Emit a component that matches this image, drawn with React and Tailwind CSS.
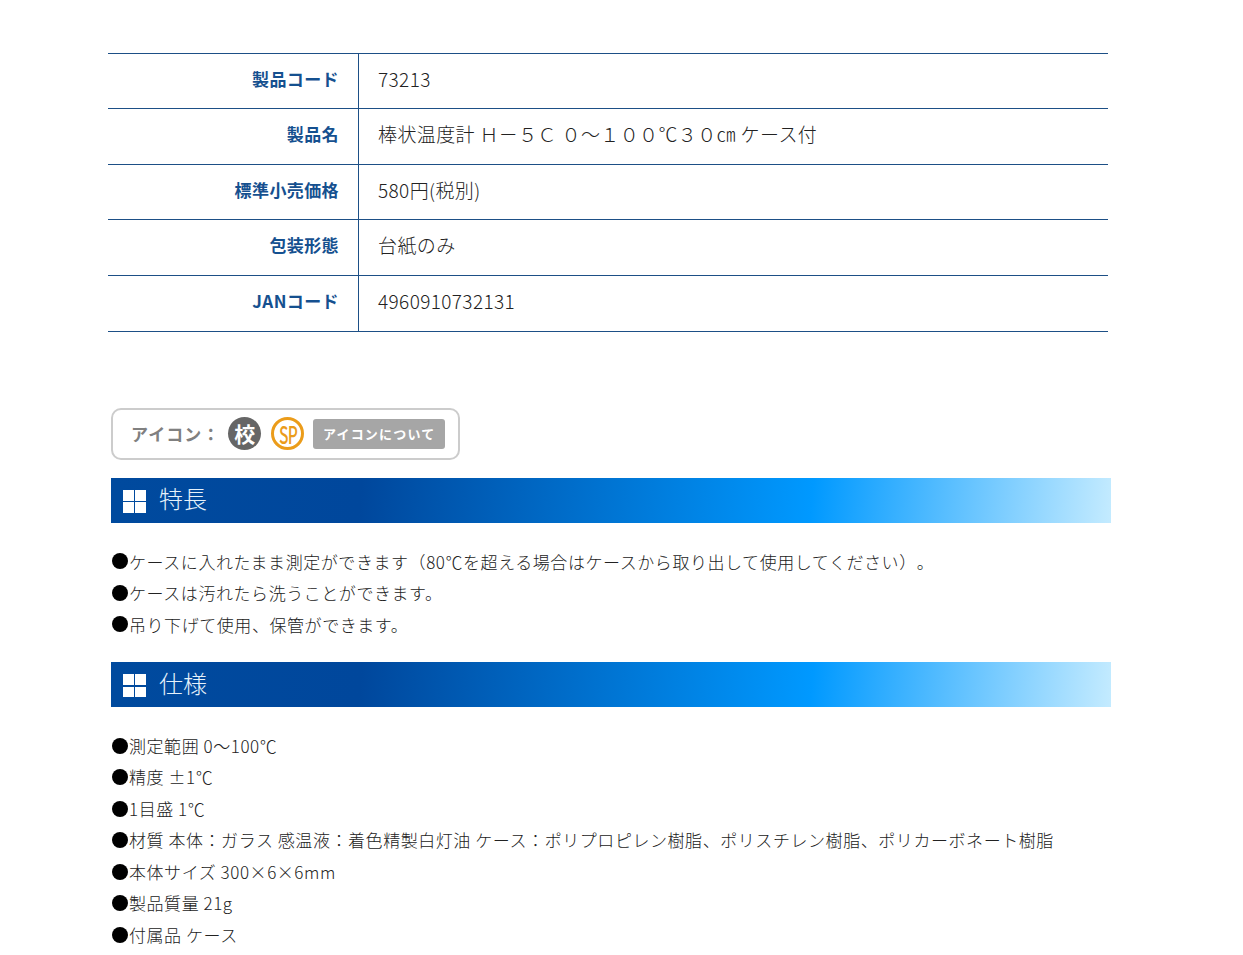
const rows = [
  ["製品コード", "73213"],
  ["製品名", "棒状温度計 Ｈ－５Ｃ ０～１００℃３０㎝ ケース付"],
  ["標準小売価格", "580円(税別)"],
  ["包装形態", "台紙のみ"],
  ["JANコード", "4960910732131"],
];
const features = [
  "ケースに入れたまま測定ができます（80℃を超える場合はケースから取り出して使用してください）。",
  "ケースは汚れたら洗うことができます。",
  "吊り下げて使用、保管ができます。",
];
const specs = [
  "測定範囲 0～100℃",
  "精度 ±1℃",
  "1目盛 1℃",
  "材質 本体：ガラス 感温液：着色精製白灯油 ケース：ポリプロピレン樹脂、ポリスチレン樹脂、ポリカーボネート樹脂",
  "本体サイズ 300×6×6mm",
  "製品質量 21g",
  "付属品 ケース",
];

function Heading({ children }) {
  return (
    <div className="flex h-[45px] w-[1000px] items-center bg-[linear-gradient(95deg,#004a9e_0%,#00479c_25%,#0099ff_70%,#c4ebff_100%)] pl-3">
      <div className="mt-[2px] grid h-[23px] w-[23px] grid-cols-2 gap-[1.5px]">
        <span className="bg-white" />
        <span className="bg-white" />
        <span className="bg-white" />
        <span className="bg-white" />
      </div>
      <h2 className="ml-[13px] pb-[4px] text-[24px] leading-none font-light text-[#e6f2fb]">{children}</h2>
    </div>
  );
}

function List({ items }) {
  return (
    <ul className="text-[17px] leading-[31.5px] font-light tracking-[0.56px] text-[#222] [text-spacing-trim:space-all]">
      {items.map((t) => (
        <li key={t} className="ml-px flex items-center whitespace-nowrap">
          <span className="mr-px h-[16px] w-[16px] shrink-0 rounded-full bg-black" />
          <span>{t}</span>
        </li>
      ))}
    </ul>
  );
}

export default function App() {
  return (
    <div className="h-[955px] overflow-hidden bg-white pt-[52.6px] font-['Noto_Sans_CJK_JP','Noto_Sans',sans-serif]">
      <div className="ml-[108px] w-[1000px] border-t border-[#1d4f86]">
        {rows.map(([k, v]) => (
          <div key={k} className="flex h-[55.6px] border-b border-[#1d4f86]">
            <div className="flex w-[251px] shrink-0 items-center justify-end border-r border-[#1d4f86] pr-[19px] pb-[5px] text-[17px] font-bold tracking-[0.4px] text-[#15508f]">
              {k}
            </div>
            <div className="flex items-center pb-[4px] pl-[19px] text-[19px] font-light tracking-[0.38px] text-[#222]">{v}</div>
          </div>
        ))}
      </div>

      <div className="mt-[76.4px] ml-[111px]">
        <div className="flex h-[52px] w-[349px] items-center rounded-[10px] border-2 border-[#cccccc] pl-[18px]">
          <span className="text-[17px] font-bold tracking-[1px] text-[#808080]">アイコン：</span>
          <span className="ml-[8px] flex h-[33px] w-[33px] items-center justify-center rounded-full bg-[#666] text-[21px] leading-none font-bold text-white">校</span>
          <span className="ml-[10px] flex h-[33px] w-[33px] items-center justify-center rounded-full border-[3px] border-[#eb9c1a] text-[24px] leading-none font-medium text-[#eb9c1a]">
            <span className="inline-block scale-x-[0.65] tracking-[-1px]">SP</span>
          </span>
          <span className="ml-[9px] flex h-[30px] w-[132px] items-center justify-center rounded-[3px] bg-[#a6a6a6] text-[13px] font-bold tracking-[1.2px] text-white">アイコンについて</span>
        </div>

        <div className="mt-[18px]">
          <Heading>特長</Heading>
        </div>
        <div className="mt-[22.7px]">
          <List items={features} />
        </div>
        <div className="mt-[22.3px]">
          <Heading>仕様</Heading>
        </div>
        <div className="mt-[22.4px]">
          <List items={specs} />
        </div>
      </div>
    </div>
  );
}
